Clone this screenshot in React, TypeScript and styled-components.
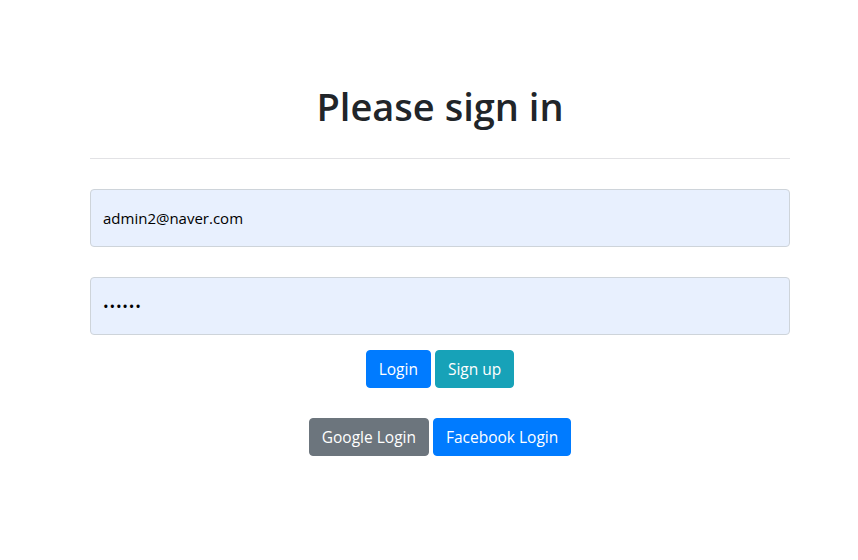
import React, { useState } from "react";
import styled, { createGlobalStyle } from "styled-components";

const GlobalStyle = createGlobalStyle`
  html, body {
    margin: 0;
    padding: 0;
    background: #fff;
    font-family: "Open Sans", "Noto Sans", sans-serif;
    color: #212529;
  }
  * { box-sizing: border-box; }
`;

const Page = styled.div`
  width: 858px;
  padding: 82px 68px 0 90px;
`;

const Title = styled.h1`
  margin: 0;
  font-size: 38px;
  font-weight: 600;
  line-height: 48px;
  text-align: center;
  color: #212529;
`;

const Divider = styled.hr`
  margin: 28px 0 30px;
  border: 0;
  border-top: 1px solid #e2e2e5;
`;

const Form = styled.form`
  display: flex;
  flex-direction: column;
  gap: 30px;
`;

const Input = styled.input<{ $masked?: boolean }>`
  display: block;
  width: 100%;
  height: 58px;
  padding: 0 12px;
  font-family: "Open Sans", "Noto Sans", sans-serif;
  font-size: 15px;
  letter-spacing: ${(p) => (p.$masked ? "0.8px" : "normal")};
  color: #000;
  background: #e8f0fe;
  border: 1px solid #ced4da;
  border-radius: 4px;
  outline: none;
`;

const ButtonRow = styled.div<{ top: number }>`
  display: flex;
  justify-content: center;
  gap: 4px;
  margin-top: ${(p) => p.top}px;
`;

const Button = styled.button<{ tone: string }>`
  height: 38px;
  padding: 0 12px;
  font-family: "Open Sans", "Noto Sans", sans-serif;
  font-size: 15.5px;
  color: #fff;
  background: ${(p) => p.tone};
  border: 1px solid ${(p) => p.tone};
  border-radius: 4px;
  cursor: pointer;
`;

export default function App() {
  const [email, setEmail] = useState("admin2@naver.com");
  const [password, setPassword] = useState("123456");

  return (
    <>
      <GlobalStyle />
      <Page>
        <Title>Please sign in</Title>
        <Divider />
        <Form onSubmit={(e) => e.preventDefault()}>
          <Input type="email" value={email} onChange={(e) => setEmail(e.target.value)} />
          <Input
            $masked
            type="password"
            value={password}
            onChange={(e) => setPassword(e.target.value)}
          />
        </Form>
        <ButtonRow top={15}>
          <Button tone="#007bff">Login</Button>
          <Button tone="#17a2b8">Sign up</Button>
        </ButtonRow>
        <ButtonRow top={30}>
          <Button tone="#6c757d">Google Login</Button>
          <Button tone="#007bff">Facebook Login</Button>
        </ButtonRow>
      </Page>
    </>
  );
}
